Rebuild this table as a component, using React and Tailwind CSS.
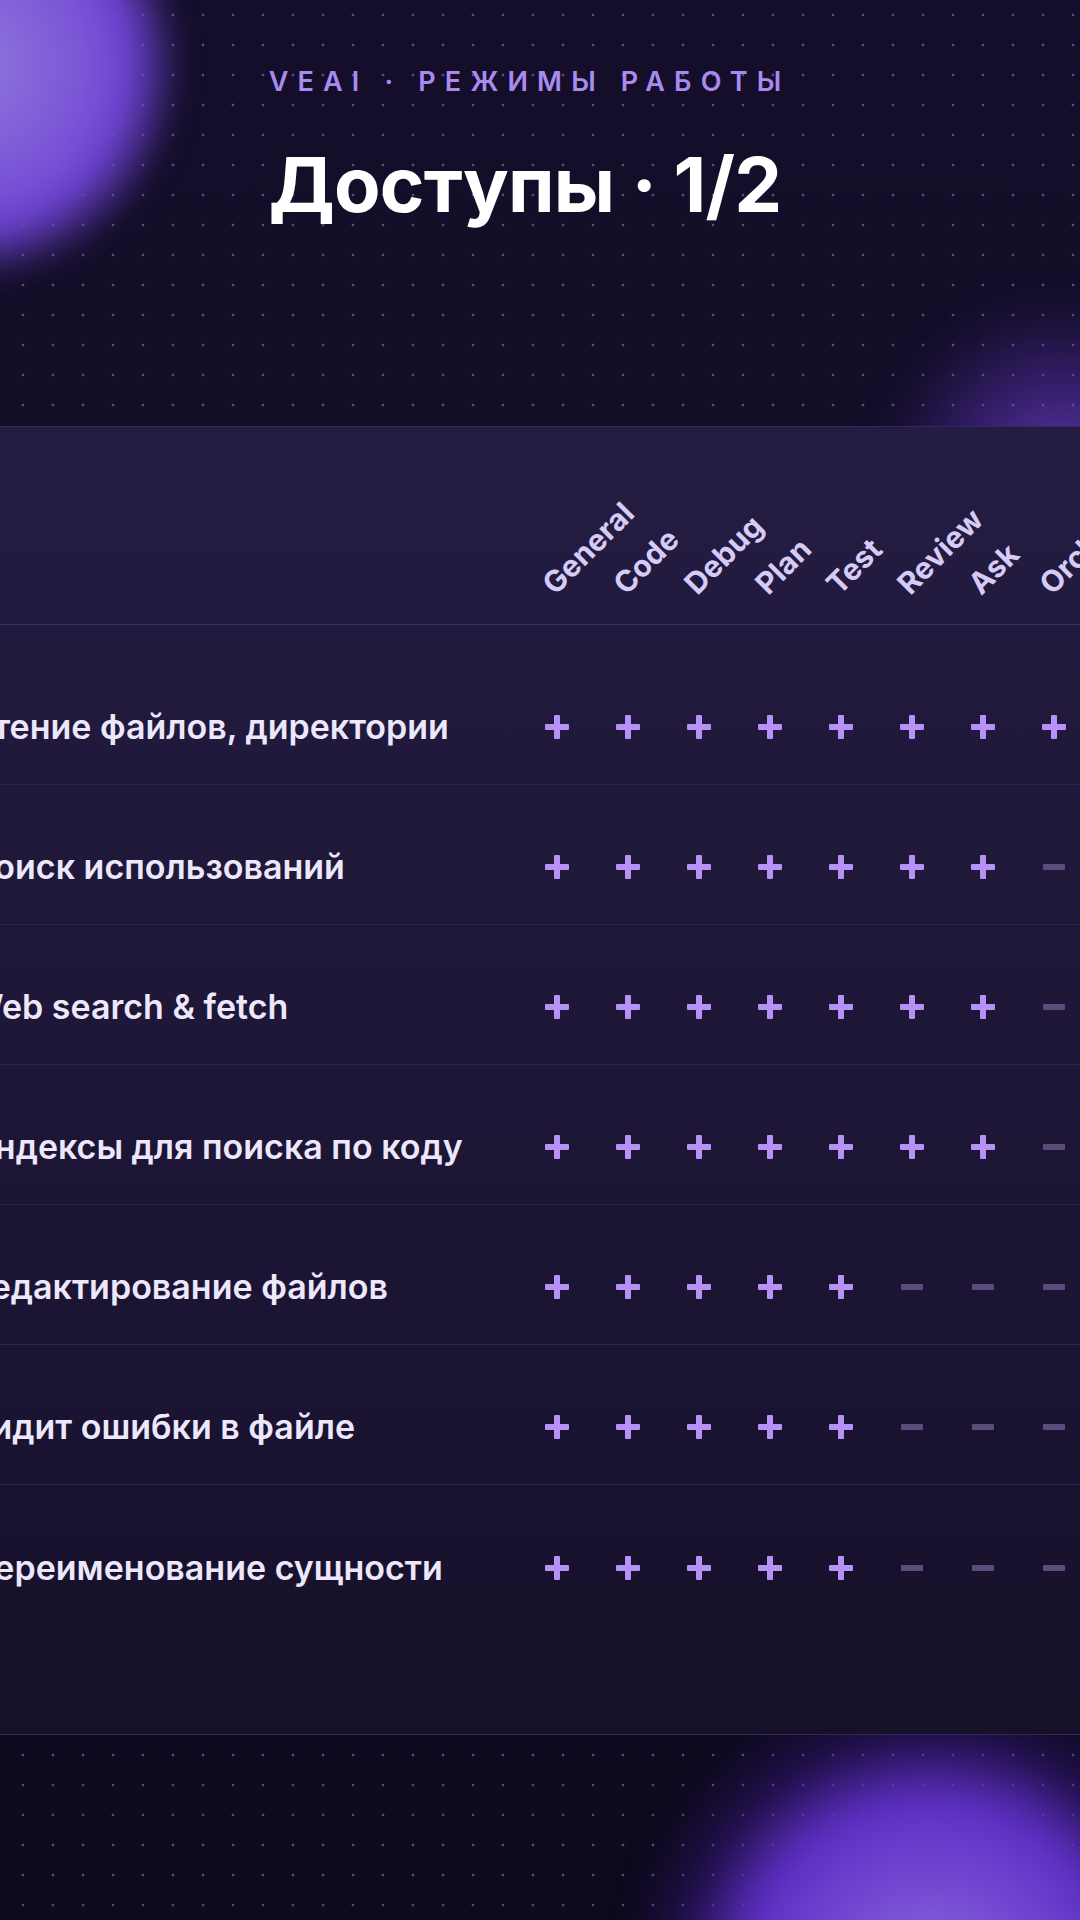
import React from "react";

const MODES = ["General", "Code", "Debug", "Plan", "Test", "Review", "Ask", "Orchestrator"];

const ROWS = [
  ["Чтение файлов, директории", 8],
  ["Поиск использований", 7],
  ["Web search & fetch", 7],
  ["Индексы для поиска по коду", 7],
  ["Редактирование файлов", 5],
  ["Видит ошибки в файле", 5],
  ["Переименование сущности", 5],
];

function Plus() {
  return (
    <svg width="24" height="24" viewBox="0 0 24 24">
      <rect x="9" y="0" width="6" height="24" rx="1" fill="#b692f6" />
      <rect x="0" y="9" width="24" height="6" rx="1" fill="#b692f6" />
    </svg>
  );
}

function Minus() {
  return (
    <svg width="22" height="6" viewBox="0 0 22 6">
      <rect x="0" y="0" width="22" height="6" rx="1" fill="#5a4c7c" />
    </svg>
  );
}

export default function App() {
  return (
    <div className="relative w-[1080px] h-[1920px] overflow-hidden bg-[linear-gradient(180deg,#140e2a_0%,#120c25_50%,#0e091d_100%)] font-['Inter','Noto_Sans',sans-serif]">
      {/* dot grid */}
      <div className="absolute inset-0 bg-[radial-gradient(circle,rgba(175,155,235,0.45)_1.1px,transparent_1.7px)] bg-[length:30px_30px] bg-[position:8px_0px]" />

      {/* glows */}
      <div className="absolute left-[-255px] top-[-155px] w-[440px] h-[440px] rounded-full blur-[12px] bg-[radial-gradient(circle_closest-side,#9079dc_0%,#7a55d6_55%,#6b42d0_74%,rgba(80,40,180,0)_100%)]" />
      <div className="absolute left-[880px] top-[300px] w-[360px] h-[360px] rounded-full blur-[20px] bg-[radial-gradient(circle_closest-side,rgba(120,70,220,0.8)_0%,rgba(100,55,200,0.45)_50%,rgba(80,40,180,0)_100%)]" />
      <div className="absolute left-[620px] top-[1680px] w-[620px] h-[620px] rounded-full blur-[16px] bg-[radial-gradient(circle_closest-side,#8d70d6_0%,#7448d2_35%,#5f30c6_60%,rgba(60,25,150,0.35)_82%,rgba(40,20,120,0)_100%)]" />

      <div className="relative ml-[-60px] w-[1170px] pt-[68px] flex flex-col items-center">
        <div className="text-[27px] leading-none font-semibold tracking-[0.34em] text-[#a98af0] pl-[0.34em]">
          VEAI · РЕЖИМЫ РАБОТЫ
        </div>
        <h1 className="mt-[51px] text-[76px] leading-none font-bold tracking-[-0.01em] text-white">
          Доступы · 1/2
        </h1>

        <div className="mt-[204px] w-full border-y border-[#33285a] bg-[linear-gradient(180deg,#241c42_0%,#1f1839_35%,#1a1331_75%,#161029_100%)] pl-[29px] pb-[109px]">
          {/* header */}
          <div className="flex h-[198px] items-end border-b border-[#3a2f66] pb-[25px]">
            <div className="w-[552px] shrink-0" />
            {MODES.map((m) => (
              <div key={m} className="w-[71px] shrink-0 flex items-end">
                <span className="ml-[37px] inline-block whitespace-nowrap origin-bottom-left -rotate-45 text-[30px] leading-none font-bold text-[#d6cbf6]">
                  {m}
                </span>
              </div>
            ))}
          </div>

          {/* rows */}
          <div className="pt-[20px]">
            {ROWS.map(([label, n], i) => (
              <div
                key={label}
                className={`flex h-[140px] items-center pt-[25px] ${i < ROWS.length - 1 ? "border-b border-[#2b2350]" : ""}`}
              >
                <div className="w-[552px] shrink-0 text-[34px] leading-none font-semibold text-[#ece7fb] whitespace-nowrap">
                  {label}
                </div>
                {MODES.map((m, j) => (
                  <div key={m} className="w-[71px] shrink-0 flex justify-center items-center">
                    {j < n ? <Plus /> : <Minus />}
                  </div>
                ))}
              </div>
            ))}
          </div>
        </div>
      </div>
    </div>
  );
}
